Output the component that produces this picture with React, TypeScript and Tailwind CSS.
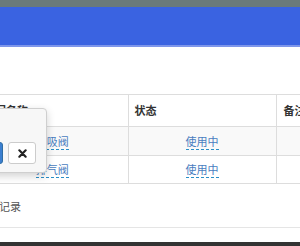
import React from 'react';

const rows = [
  { name: '呼吸阀', status: '使用中', note: '' },
  { name: '排气阀', status: '使用中', note: '' },
];

export default function App() {
  return (
    <div
      className="w-[300px] h-[246px] overflow-hidden bg-white text-[11px] text-[#333]"
      style={{ fontFamily: '"Noto Sans CJK SC", "Noto Sans", sans-serif' }}
    >
      <div className="h-[7px] bg-[#6a7a7b]" />
      <div className="h-[40px] bg-[#3a63e1] border-b-2 border-[#7e96ea]" />

      <div className="relative pt-[47px]">
        <table className="ml-[-23px] border-collapse table-fixed w-[400px]">
          <colgroup>
            <col className="w-[151px]" />
            <col className="w-[148px]" />
            <col className="w-[101px]" />
          </colgroup>
          <thead>
            <tr className="h-[32px] border-t border-b border-[#dddddd]">
              <th className="text-left font-bold px-[7px] border-r border-[#dddddd]">阀门名称</th>
              <th className="text-left font-bold px-[6px] border-r border-[#dddddd]">状态</th>
              <th className="text-left font-bold px-[7px]">备注</th>
            </tr>
          </thead>
          <tbody>
            {rows.map((r, i) => (
              <tr
                key={r.name}
                className={`border-b border-[#dddddd] ${i === 0 ? 'h-[29px] bg-[#f9f9f9]' : 'h-[28px] bg-white'}`}
              >
                <td className="text-center border-r border-[#dddddd]">
                  <span className="text-[#4a7dc0] border-b border-dashed border-[#2a8fc8]">{r.name}</span>
                </td>
                <td className="text-center border-r border-[#dddddd]">
                  <span className="text-[#4a7dc0] border-b border-dashed border-[#2a8fc8]">{r.status}</span>
                </td>
                <td>{r.note}</td>
              </tr>
            ))}
          </tbody>
        </table>

        <div className="ml-[-34px] h-[43px] flex items-center text-[#555] pt-[1px]">共 2 条记录</div>
        <div className="border-t border-[#e5e5e5] h-[15px]" />
        <div className="h-[6px] bg-[#333]" />

        {/* editable popover */}
        <div className="absolute left-[-90px] top-[61px] w-[137px] h-[65px] bg-[#f7f7f7] border border-[#cfcfcf] rounded-[4px] shadow-[0_3px_8px_rgba(0,0,0,0.18)]">
          <div className="flex justify-end items-center gap-[5px] pr-[10px] pt-[33px]">
            <input className="w-[50px] h-[22px] border border-[#ccc] bg-white rounded-[3px]" />
            <button className="w-[28px] h-[22px] rounded-[3px] bg-[#3c7fd0] border border-[#2e6da4] text-white text-[11px]">
              ✔
            </button>
            <button className="w-[28px] h-[22px] rounded-[3px] bg-white border border-[#ccc] flex items-center justify-center">
              <svg width="9" height="9" viewBox="0 0 10 10">
                <path d="M1.5 1.5 L8.5 8.5 M8.5 1.5 L1.5 8.5" stroke="#222" strokeWidth="2.4" strokeLinecap="round" />
              </svg>
            </button>
          </div>
        </div>
      </div>
    </div>
  );
}
